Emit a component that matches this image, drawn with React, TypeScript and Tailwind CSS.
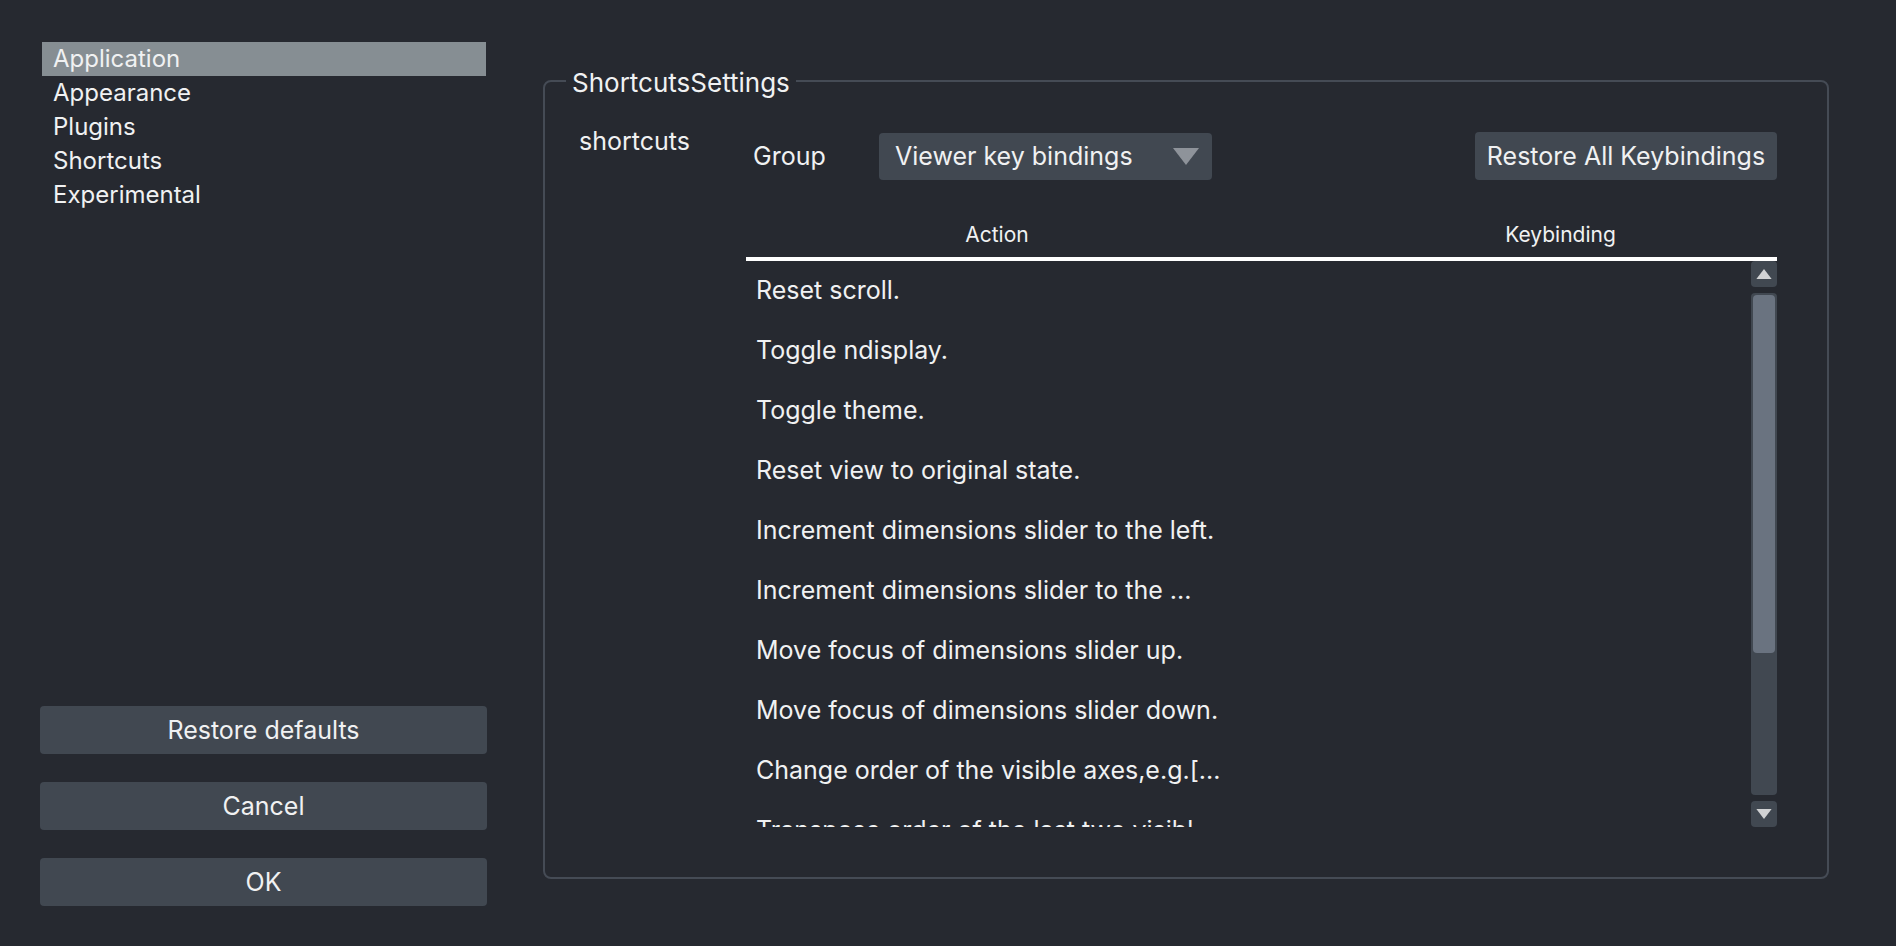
const sections = ['Application', 'Appearance', 'Plugins', 'Shortcuts', 'Experimental']

const actions = [
  'Reset scroll.',
  'Toggle ndisplay.',
  'Toggle theme.',
  'Reset view to original state.',
  'Increment dimensions slider to the left.',
  'Increment dimensions slider to the ...',
  'Move focus of dimensions slider up.',
  'Move focus of dimensions slider down.',
  'Change order of the visible axes,e.g.[...',
  'Transpose order of the last two visibl',
]

const Triangle = ({ down, className }: { down?: boolean; className: string }) => (
  <svg viewBox="0 0 26 17" className={className}>
    <polygon points={down ? '0,0 26,0 13,17' : '0,17 26,17 13,0'} fill="currentColor" />
  </svg>
)

const Button = ({ children }: { children: string }) => (
  <button className="w-[447px] h-[48px] rounded-[4px] bg-[#414851] text-[25px] pt-[2px] text-[#f0f1f2]">
    {children}
  </button>
)

const App = () => {
  return (
    <div className="w-full h-[946px] bg-[#262930] flex text-[#f0f1f2] font-['Inter','Noto_Sans',sans-serif]">
      <div className="pl-[40px] w-[487px] flex flex-col justify-between pt-[42px] pb-[40px]">
        <ul className="ml-[2px] w-[444px]">
          {sections.map((s, i) => (
            <li
              key={s}
              className={`h-[34px] flex items-center pl-[11px] text-[24px] ${i === 0 ? 'bg-[#868e93]' : ''}`}
            >
              {s}
            </li>
          ))}
        </ul>
        <div className="flex flex-col gap-[28px]">
          <Button>Restore defaults</Button>
          <Button>Cancel</Button>
          <Button>OK</Button>
        </div>
      </div>

      <div className="pl-[56px] pt-[63px]">
        <fieldset className="w-[1286px] h-[816px] border-2 border-[#454b55] rounded-[8px] p-0 m-0">
          <legend className="ml-[21px] px-[6px] pt-[4px] text-[26px] leading-[32px]">ShortcutsSettings</legend>
          <div className="flex pt-[26px] pl-[34px] pr-[50px]">
            <div className="w-[167px] text-[25px] leading-[32px]">shortcuts</div>
            <div className="flex-1 pt-[7px]">
              <div className="flex items-center justify-between h-[48px]">
                <div className="flex items-center">
                  <span className="w-[133px] pl-[7px] pt-[2px] text-[25px]">Group</span>
                  <div className="w-[333px] h-[47px] rounded-[4px] bg-[#414851] flex items-center justify-between pl-[16px] pr-[13px]">
                    <span className="text-[25px] pt-[2px]">Viewer key bindings</span>
                    <Triangle down className="w-[26px] h-[17px] text-[#8e939a]" />
                  </div>
                </div>
                <button className="w-[302px] h-[48px] rounded-[4px] bg-[#414851] text-[25px] pt-[2px]">
                  Restore All Keybindings
                </button>
              </div>

              <div className="mt-[33px] h-[44px] flex items-center text-[21px]">
                <div className="w-[502px] text-center">Action</div>
                <div className="flex-1 text-center pl-[96px]">Keybinding</div>
              </div>
              <div className="h-[4px] bg-white" />
              <div className="h-[566px] flex overflow-hidden">
                <div className="flex-1">
                  {actions.map((a) => (
                    <div key={a} className="h-[60px] flex items-center pl-[10px] text-[25px] whitespace-nowrap">
                      {a}
                    </div>
                  ))}
                </div>
                <div className="w-[26px] flex flex-col gap-[6px]">
                  <div className="h-[26px] rounded-[4px] bg-[#414851] flex items-center justify-center">
                    <Triangle className="w-[16px] h-[10px] text-[#d1d2d4]" />
                  </div>
                  <div className="flex-1 rounded-[4px] bg-[#414851] p-[2px]">
                    <div className="h-[358px] rounded-[4px] bg-[#6a7380]" />
                  </div>
                  <div className="h-[26px] rounded-[4px] bg-[#414851] flex items-center justify-center">
                    <Triangle down className="w-[16px] h-[10px] text-[#d1d2d4]" />
                  </div>
                </div>
              </div>
            </div>
          </div>
        </fieldset>
      </div>
    </div>
  )
}

export default App
